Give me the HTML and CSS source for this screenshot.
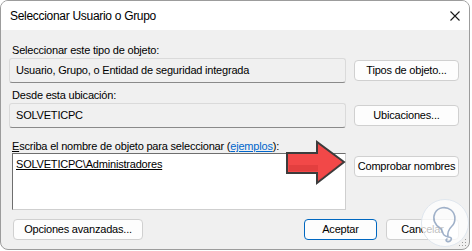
FILE: index.html
```html
<!DOCTYPE html>
<html lang="es">
<head>
<meta charset="utf-8">
<title>Seleccionar Usuario o Grupo</title>
<link rel="stylesheet" href="styles.css">
</head>
<body>
<div class="window">
  <div class="titlebar">
    <span class="title">Seleccionar Usuario o Grupo</span>
    <svg class="close" width="10" height="10" viewBox="0 0 10 10"><path d="M0.5 0.5 L9.5 9.5 M9.5 0.5 L0.5 9.5" stroke="#1a1a1a" stroke-width="1.1" fill="none"/></svg>
  </div>
  <div class="content">
    <div class="section s1">
      <div class="label">Seleccionar este tipo de objeto:</div>
      <div class="field">Usuario, Grupo, o Entidad de seguridad integrada</div>
      <div class="btn">Tipos de objeto...</div>
    </div>
    <div class="section s2">
      <div class="label">Desde esta ubicación:</div>
      <div class="field">SOLVETICPC</div>
      <div class="btn">Ubicaciones...</div>
    </div>
    <div class="section s3">
      <div class="label"><u>E</u>scriba el nombre de objeto para seleccionar (<a class="link">ejemplos</a>):</div>
      <div class="textarea"><u>SOLVETICPC\Administradores</u></div>
      <div class="btn btn-top">Comprobar nombres</div>
    </div>
    <div class="footer">
      <div class="btn btn-adv">Opciones avanzadas...</div>
      <div class="spacer"></div>
      <div class="btn btn-ok">Aceptar</div>
      <div class="btn btn-cancel">Cancelar</div>
    </div>
  </div>
  <svg class="arrow" width="64" height="48" viewBox="284 139 64 48">
    <polygon points="287,153 317,153 317,142 344,162 317,183 317,173 287,173" fill="#f24848" stroke="#3c3c3c" stroke-width="2" stroke-linejoin="miter"/>
    <polygon points="289,165 318,165 318,180 340,164 343,162 318,181 318,171 289,171" fill="#d83a3a" opacity="0.6"/>
  </svg>
  <svg class="logo" width="50" height="50" viewBox="0 0 50 50">
    <circle cx="25" cy="25" r="23.5" fill="#ffffff" fill-opacity="0.75" stroke="#dfe6ee" stroke-width="1"/>
    <path d="M28 39 C27 34 29 31 32 28 C36 24 36 16 31 12 C26 8 18 9 15 15 C12 21 15 27 20 30 C23 32 22 35 24 37 C27 40 33 38 31 42 C29 45 24 43 27 41" fill="none" stroke="#8fa3bf" stroke-width="1.6" stroke-linecap="round" opacity="0.85"/>
  </svg>
  <svg class="grip" width="8" height="8" viewBox="0 0 8 8">
    <g fill="#9a9a9a"><rect x="6" y="0" width="1" height="1"/><rect x="3" y="3" width="1" height="1"/><rect x="6" y="3" width="1" height="1"/><rect x="0" y="6" width="1" height="1"/><rect x="3" y="6" width="1" height="1"/><rect x="6" y="6" width="1" height="1"/></g>
  </svg>
</div>
</body>
</html>
```
FILE: styles.css
```css
* { box-sizing: border-box; }
html, body { margin: 0; padding: 0; background: #ffffff; }
body {
  font-family: "Liberation Sans", Arial, sans-serif;
  font-size: 11px;
  letter-spacing: -0.2px;
  color: #000;
}
.window {
  position: relative;
  width: 470px;
  height: 250px;
  border: 1px solid #9c9c9c;
  border-radius: 8px;
  background: #f0f0f0;
  overflow: hidden;
}
.titlebar {
  height: 29px;
  background: #ffffff;
  display: flex;
  align-items: center;
  padding: 0 0 0 9px;
}
.title {
  font-size: 12px;
  letter-spacing: -0.3px;
  flex: 1;
}
.close { margin-right: 9px; }
.content {
  padding: 0 0 0 8px;
}
.section {
  display: grid;
  grid-template-columns: 337px 105px;
  column-gap: 8px;
}
.label {
  grid-column: 1 / span 2;
  height: 14px;
  line-height: 14px;
  padding-left: 3px;
  white-space: nowrap;
}
.s1 { margin-top: 13px; }
.s1 .field { margin-top: 1px; }
.s2 { margin-top: 5px; }
.s2 .field { margin-top: 1px; }
.s3 { margin-top: 11px; }
.field {
  height: 25px;
  line-height: 23px;
  background: #f0f0f0;
  border: 1px solid #dadada;
  border-bottom-color: #8a8a8a;
  border-radius: 3px;
  padding-left: 6px;
  white-space: nowrap;
  overflow: hidden;
}
.btn {
  height: 21px;
  line-height: 19px;
  background: #fdfdfd;
  border: 1px solid #d0d0d0;
  border-radius: 4px;
  text-align: center;
  white-space: nowrap;
  align-self: center;
}
.btn-top { align-self: start; margin-top: 3px; }
.textarea {
  height: 57px;
  margin-left: 3px;
  background: #ffffff;
  border: 1px solid #cfcfcf;
  border-top-color: #6e6e6e;
  border-left-color: #6e6e6e;
  padding: 3px 0 0 3px;
  line-height: 14px;
}
.link { color: #0066cc; text-decoration: underline; }
.footer {
  display: flex;
  margin-top: 9px;
  padding-left: 4px;
  padding-right: 10px;
  gap: 9px;
}
.spacer { flex: 1; }
.btn-adv { width: 130px; }
.btn-ok { width: 73px; border-color: #0067c0; }
.btn-cancel { width: 73px; }
.arrow { position: absolute; left: 283px; top: 138px; }
.logo { position: absolute; left: 419px; top: 197px; }
.grip { position: absolute; right: 2px; bottom: 2px; }
```
